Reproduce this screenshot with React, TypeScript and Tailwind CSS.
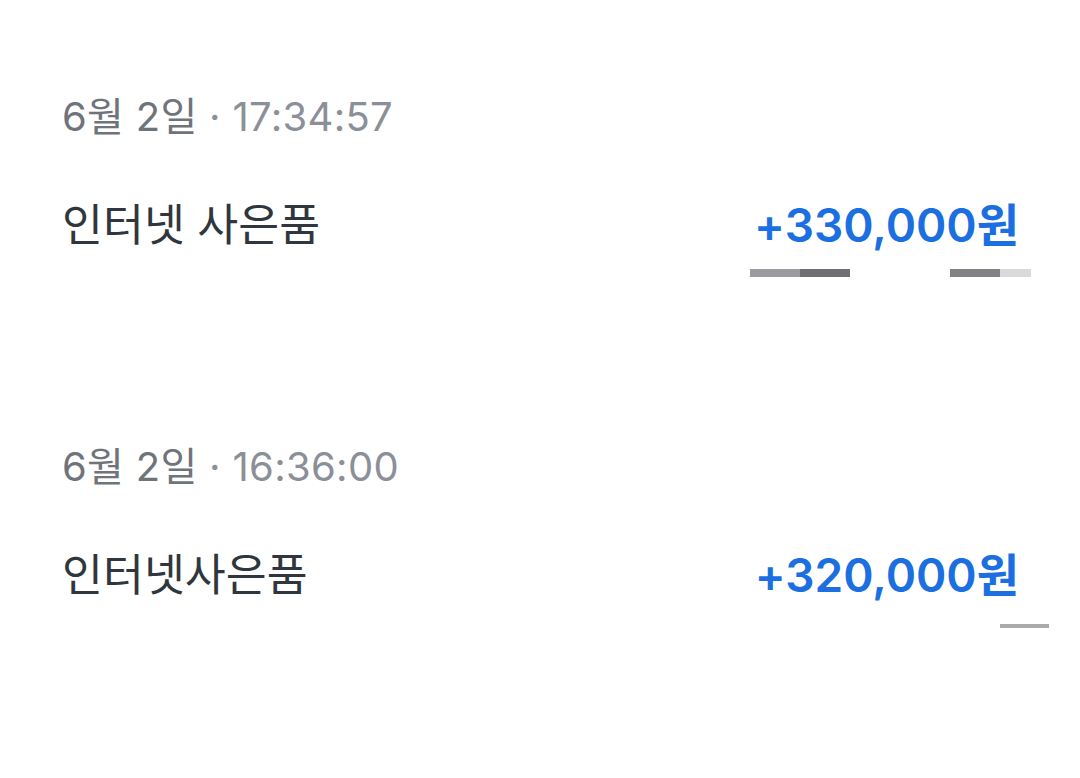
import React from "react";

const font = { fontFamily: '"Inter", "Noto Sans CJK KR", sans-serif' };

function Item({ date, time, title, amount, bars }: { date: string; time: string; title: string; amount: string; bars: React.ReactNode }) {
  return (
    <div className="flex flex-col">
      <div className="h-[70px] flex items-center text-[40px] tracking-[0.3px] leading-none">
        <span className="text-[#6f747b]">{date}</span>
        <span className="text-[#8b9098]">&nbsp;·&nbsp;{time}</span>
      </div>
      <div className="mt-[48px] h-[50px] flex items-center justify-between pr-[61px]">
        <span className="text-[44.5px] text-[#30363d] leading-none">{title}</span>
        <span className="text-[46px] font-semibold text-[#1b6fe0] leading-none">{amount}</span>
      </div>
      {bars}
    </div>
  );
}

export default function App() {
  return (
    <div className="w-[1080px] h-[778px] bg-white pl-[62px] pt-[82px]" style={font}>
      <Item
        date="6월 2일"
        time="17:34:57"
        title="인터넷 사은품"
        amount="+330,000원"
        bars={
          <div className="relative h-[8px] mt-[19px]">
            <div className="absolute left-[688px] top-0 flex h-[8px]">
              <div className="w-[50px] bg-[#9a9ca0]" />
              <div className="w-[50px] bg-[#6e7076]" />
            </div>
            <div className="absolute left-[888px] top-0 flex h-[8px]">
              <div className="w-[50px] bg-[#808286]" />
              <div className="w-[31px] bg-[#d8dadc]" />
            </div>
          </div>
        }
      />
      <div className="h-[155px]" />
      <Item
        date="6월 2일"
        time="16:36:00"
        title="인터넷사은품"
        amount="+320,000원"
        bars={
          <div className="relative h-[4px] mt-[24px]">
            <div className="absolute left-[938px] top-0 h-[4px] w-[49px] bg-[#aaaaaa]" />
          </div>
        }
      />
    </div>
  );
}
